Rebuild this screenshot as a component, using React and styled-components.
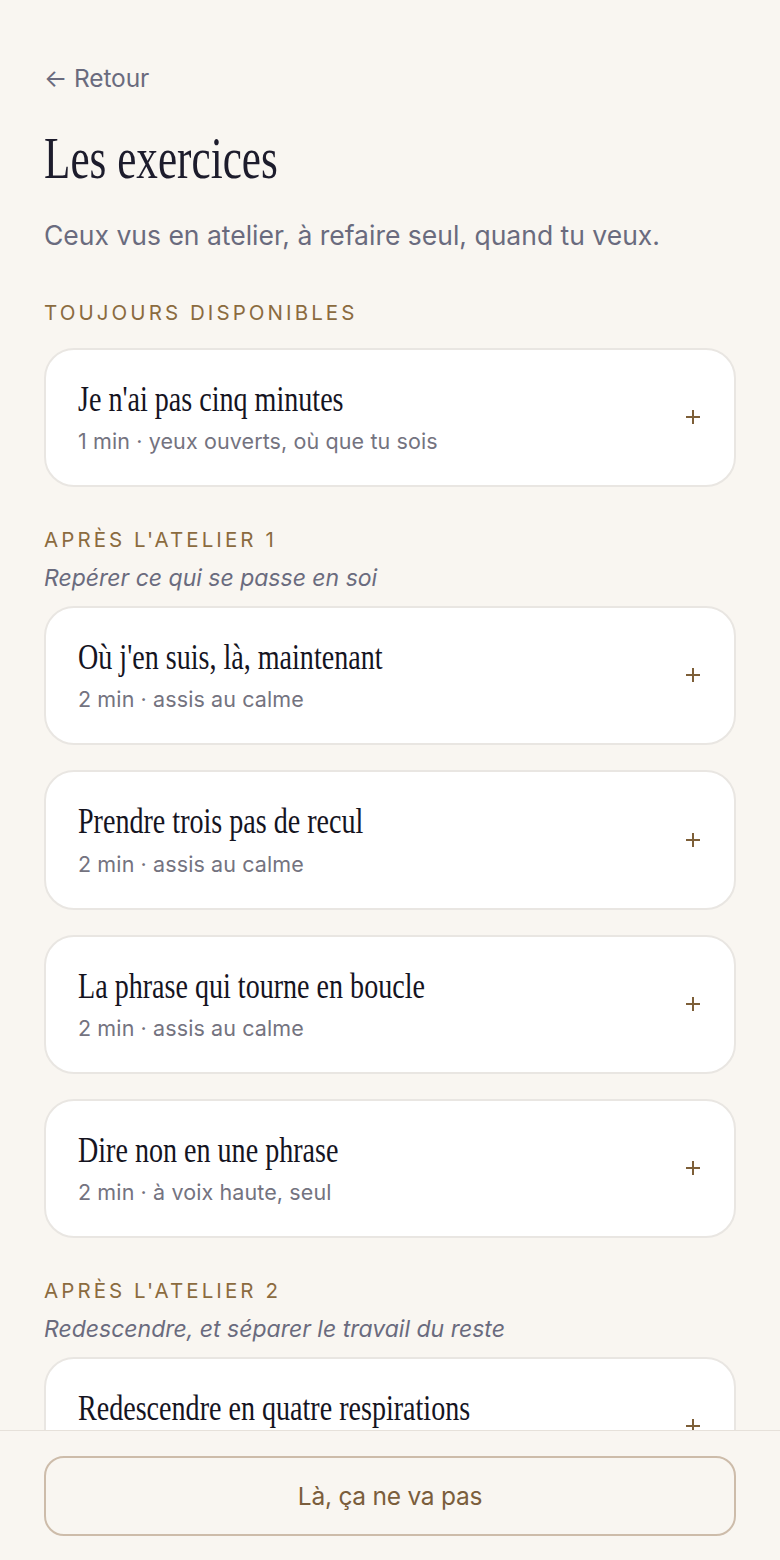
import React from "react";
import styled, { createGlobalStyle } from "styled-components";

const Global = createGlobalStyle`
  html, body { margin: 0; padding: 0; background: #f9f6f1; }
  body { font-family: Inter, "Noto Sans", sans-serif; -webkit-font-smoothing: antialiased; }
  * { box-sizing: border-box; }
`;

const Page = styled.main`
  padding: 61px 44px 170px;
  min-height: 1560px;
  background: #f9f6f1;
`;

const Back = styled.a`
  display: block;
  font-family: Inter, sans-serif;
  font-size: 24.5px;
  line-height: 1.4;
  color: #6a6b7e;
  text-decoration: none;
  letter-spacing: -0.005em;
`;

const Title = styled.h1`
  margin: 30px 0 0;
  font-family: "Liberation Serif", serif;
  font-weight: 400;
  font-size: 60px;
  line-height: 1.1;
  color: #1d1c2c;
`;

const Narrow = styled.span`
  display: inline-block;
  white-space: nowrap;
  transform: scaleX(${(p) => p.$sx});
  transform-origin: left center;
`;

const Subtitle = styled.p`
  margin: 26px 0 0;
  font-size: 26.5px;
  line-height: 1.4;
  color: #6a6b7e;
`;

const Section = styled.section`
  margin-top: ${(p) => p.$top}px;
`;

const Label = styled.h2`
  margin: 0;
  font-size: 20.5px;
  font-weight: 400;
  line-height: 1.3;
  letter-spacing: 0.15em;
  text-transform: uppercase;
  color: #8b6b3f;
`;

const Hint = styled.p`
  margin: 8px 0 0;
  font-size: 23px;
  font-style: italic;
  line-height: 1.4;
  color: #6a6b7e;
`;

const List = styled.div`
  display: flex;
  flex-direction: column;
  gap: 25px;
  margin-top: ${(p) => (p.$hint ? 12 : 21)}px;
`;

const Card = styled.button`
  display: flex;
  align-items: center;
  justify-content: space-between;
  width: 100%;
  padding: 28px 33px 29px 32px;
  background: #ffffff;
  border: 2px solid #e9e6e2;
  border-radius: 30px;
  text-align: left;
  cursor: pointer;
  font: inherit;
`;

const CardText = styled.div`
  display: flex;
  flex-direction: column;
  gap: 5px;
`;

const CardTitle = styled.div`
  font-family: "Liberation Serif", serif;
  font-size: 36px;
  line-height: 1.2;
  color: #15141f;
`;

const Meta = styled.div`
  font-size: 21.5px;
  line-height: 1.4;
  color: #74737f;
  letter-spacing: 0.005em;
`;

const Plus = styled.svg`
  flex: none;
  width: 16px;
  height: 16px;
`;

const Footer = styled.footer`
  position: fixed;
  left: 0;
  right: 0;
  bottom: 0;
  padding: 25px 44px 24px;
  background: #f9f6f1;
  border-top: 1px solid #e6e1da;
`;

const Urgent = styled.button`
  display: flex;
  align-items: center;
  justify-content: center;
  width: 100%;
  height: 80px;
  background: transparent;
  border: 2px solid #cdbcaa;
  border-radius: 20px;
  font-family: Inter, sans-serif;
  font-size: 24.5px;
  color: #7b5e3c;
  letter-spacing: -0.01em;
  cursor: pointer;
`;

const sections = [
  {
    label: "Toujours disponibles",
    items: [
      { title: "Je n'ai pas cinq minutes", meta: "1 min · yeux ouverts, où que tu sois" },
    ],
  },
  {
    label: "Après l'atelier 1",
    hint: "Repérer ce qui se passe en soi",
    items: [
      { title: "Où j'en suis, là, maintenant", meta: "2 min · assis au calme" },
      { title: "Prendre trois pas de recul", meta: "2 min · assis au calme" },
      { title: "La phrase qui tourne en boucle", meta: "2 min · assis au calme" },
      { title: "Dire non en une phrase", meta: "2 min · à voix haute, seul" },
    ],
  },
  {
    label: "Après l'atelier 2",
    hint: "Redescendre, et séparer le travail du reste",
    items: [
      { title: "Redescendre en quatre respirations", meta: "2 min · assis au calme" },
    ],
  },
];

function PlusIcon() {
  return (
    <Plus viewBox="0 0 16 16" aria-hidden="true">
      <path d="M8 1v14M1 8h14" stroke="#7d5f38" strokeWidth="2" fill="none" />
    </Plus>
  );
}

export default function App() {
  return (
    <>
      <Global />
      <Page>
        <Back href="#">← Retour</Back>
        <Title>
          <Narrow $sx={0.72}>Les exercices</Narrow>
        </Title>
        <Subtitle>Ceux vus en atelier, à refaire seul, quand tu veux.</Subtitle>
        {sections.map((s, i) => (
          <Section key={s.label} $top={i === 0 ? 46 : 40}>
            <Label>{s.label}</Label>
            {s.hint && <Hint>{s.hint}</Hint>}
            <List $hint={!!s.hint}>
              {s.items.map((it) => (
                <Card key={it.title}>
                  <CardText>
                    <CardTitle>
                      <Narrow $sx={0.78}>{it.title}</Narrow>
                    </CardTitle>
                    <Meta>{it.meta}</Meta>
                  </CardText>
                  <PlusIcon />
                </Card>
              ))}
            </List>
          </Section>
        ))}
      </Page>
      <Footer>
        <Urgent>Là, ça ne va pas</Urgent>
      </Footer>
    </>
  );
}
